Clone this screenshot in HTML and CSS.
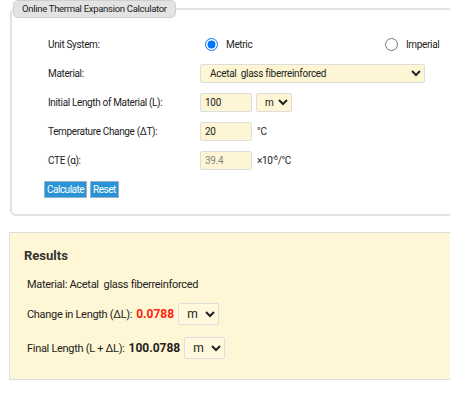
FILE: index.html
```html
<!DOCTYPE html>
<html lang="en">
<head>
    <meta charset="UTF-8">
    <title>Online Thermal Expansion Calculator</title>
    <link rel="stylesheet" href="styles.css">
</head>
<body>
    <div class="page">
        <fieldset class="calc">
            <legend>Online Thermal Expansion Calculator</legend>

            <div class="form">
                <div class="label">Unit System:</div>
                <div class="field radios">
                    <label class="opt metric"><input type="radio" name="units" checked> Metric</label>
                    <label class="opt"><input type="radio" name="units"> Imperial</label>
                </div>

                <div class="label">Material:</div>
                <div class="field">
                    <select class="material">
                        <option>Acetal&nbsp; glass fiberreinforced</option>
                    </select>
                </div>

                <div class="label">Initial Length of Material (L):</div>
                <div class="field">
                    <input class="num" type="text" value="100">
                    <select class="unit">
                        <option>m</option>
                    </select>
                </div>

                <div class="label">Temperature Change (ΔT):</div>
                <div class="field">
                    <input class="num" type="text" value="20">
                    <span class="suffix">°C</span>
                </div>

                <div class="label">CTE (α):</div>
                <div class="field">
                    <input class="num readonly" type="text" value="39.4" readonly>
                    <span class="suffix">×10<sup>-6</sup>/°C</span>
                </div>
            </div>

            <div class="buttons">
                <button>Calculate</button>
                <button>Reset</button>
            </div>
        </fieldset>

        <div class="results">
            <h3>Results</h3>
            <p>Material: Acetal&nbsp; glass fiberreinforced</p>
            <p class="line">Change in Length (ΔL): <b class="red">0.0788</b>
                <select class="unit big"><option>m</option></select>
            </p>
            <p class="line">Final Length (L + ΔL): <b>100.0788</b>
                <select class="unit big"><option>m</option></select>
            </p>
        </div>
    </div>
</body>
</html>
```

FILE: styles.css
```css
body {
    margin: 0;
    overflow: hidden;
    font-family: Roboto, 'Liberation Sans', sans-serif;
    color: #222;
}

.page {
    width: 480px;
    padding-left: 10px;
}

.calc {
    margin: 0;
    padding: 0;
    border: 2px solid #e2e2e2;
    border-radius: 6px;
    height: 216px;
    box-sizing: border-box;
}

.calc legend {
    margin-left: 1px;
    padding: 2px 8px;
    font-size: 9.5px;
    letter-spacing: -0.3px;
    line-height: 12px;
    background: #e3e3e3;
    border: 1px solid #cfcfcf;
    border-radius: 5px;
    color: #222;
}

.form {
    display: grid;
    grid-template-columns: 152px 1fr;
    grid-auto-rows: 29px;
    padding: 12px 0 0 36px;
    font-size: 10px;
    letter-spacing: -0.35px;
    align-items: center;
}

.field {
    display: flex;
    align-items: center;
}

.opt {
    display: flex;
    align-items: center;
}

.opt input {
    margin: 0 8px 0 5px;
    width: 13px;
    height: 13px;
}

.metric {
    width: 180px;
}

select, input.num {
    font-family: inherit;
    font-size: 10px;
    letter-spacing: -0.3px;
    background: #fdf5d4;
    border: 1px solid #ddd;
    border-radius: 2px;
    height: 19px;
    box-sizing: border-box;
    color: #222;
}

.material {
    width: 225px;
    padding-left: 5px;
}

input.num {
    width: 52px;
    padding: 0 4px;
}

input.readonly {
    color: #888;
}

.unit {
    width: 36px;
    margin-left: 4px;
    padding-left: 4px;
}

.suffix {
    margin-left: 5px;
}

.suffix sup {
    font-size: 7px;
}

.buttons {
    display: flex;
    gap: 3px;
    padding: 6px 0 0 32px;
}

.buttons button {
    font-family: inherit;
    font-size: 10px;
    letter-spacing: -0.5px;
    color: #fff;
    background: #2a93d5;
    border: 1px solid #9bb3c4;
    padding: 0 2px;
    height: 17px;
    line-height: 14px;
}

.results {
    margin-top: 16px;
    margin-left: -1px;
    height: 148px;
    box-sizing: border-box;
    background: #fff6d5;
    border: 1px solid #ddd;
    padding: 13px 0 0 14px;
    font-size: 11px;
    letter-spacing: -0.3px;
}

.results h3 {
    margin: 0 0 11px 0;
    font-size: 13px;
    letter-spacing: 0;
    line-height: 19px;
    color: #333;
}

.results p {
    margin: 0 0 10px 3px;
    display: flex;
    align-items: center;
    gap: 4px;
    line-height: 17px;
}

.results b {
    font-size: 12px;
    letter-spacing: 0;
}

.results .line {
    height: 22px;
    margin-bottom: 12px;
}

.red {
    color: #f21;
}

.unit.big {
    font-size: 12px;
    width: 41px;
    height: 22px;
    background: #fff8dc;
    margin-left: 0;
}
```
